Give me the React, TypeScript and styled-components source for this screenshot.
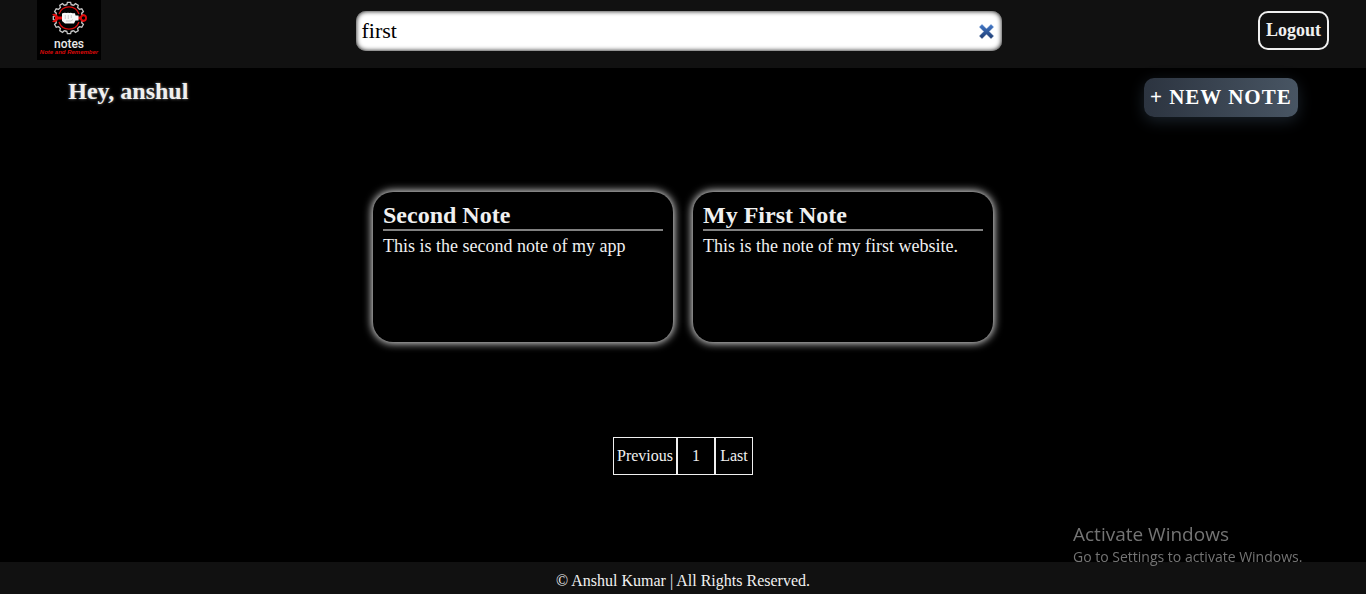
import React, { useState } from "react";
import styled, { createGlobalStyle } from "styled-components";

const GlobalStyle = createGlobalStyle`
  * { box-sizing: border-box; margin: 0; padding: 0; }
  body {
    background: #000;
    color: #f0f0f0;
    font-family: "Liberation Serif", "Times New Roman", serif;
    font-size: 16px;
  }
  button, input { font-family: inherit; }
`;

const Page = styled.div`
  display: flex;
  flex-direction: column;
  min-height: 100vh;
`;

const Header = styled.header`
  display: flex;
  justify-content: space-between;
  align-items: flex-start;
  height: 68px;
  padding: 0 37px;
  background: #111;
`;

const LogoLink = styled.a`
  display: block;
  width: 64px;
  height: 60px;
  background: #000;

  svg { display: block; }
`;

const SearchBox = styled.form`
  display: flex;
  align-items: center;
  width: 50%;
  height: 40px;
  margin-top: 11px;
  padding: 0 7px 0 5px;
  border-radius: 10px;
  background: #fff;
  box-shadow: inset 0 0 5px #000;
`;

const SearchInput = styled.input`
  flex: 1;
  min-width: 0;
  border: 0;
  outline: 0;
  background: transparent;
  color: #000;
  font-size: 22px;
  line-height: 26px;
`;

const ClearButton = styled.button`
  display: flex;
  border: 0;
  background: transparent;
  cursor: pointer;
`;

const LogoutButton = styled.button`
  height: 39px;
  margin-top: 11px;
  padding: 0 6px;
  border: 2px solid #f0f0f0;
  border-radius: 10px;
  background: transparent;
  color: #f0f0f0;
  font-size: 18px;
  font-weight: bold;
  cursor: pointer;
`;

const Main = styled.main`
  flex: 1;
`;

const TitleBar = styled.div`
  display: flex;
  justify-content: space-between;
  align-items: flex-start;
  padding: 10px 5% 0;
`;

const Greeting = styled.h1`
  font-size: 24px;
  line-height: 27px;
  text-shadow: 0 0 3px #808080;
`;

const NewNoteButton = styled.button`
  height: 39px;
  padding: 0 6px;
  border: 0;
  border-radius: 10px;
  background: linear-gradient(to right, #2c3440, #485563);
  box-shadow: 0 4px 15px rgba(65, 84, 105, 0.4);
  color: #fff;
  font-size: 21px;
  font-weight: bold;
  letter-spacing: 1px;
  cursor: pointer;
`;

const Notes = styled.section`
  display: flex;
  flex-wrap: wrap;
  justify-content: center;
  gap: 20px;
  margin-top: 75px;
`;

const NoteCard = styled.article`
  width: 300px;
  height: 150px;
  padding: 10px;
  border-radius: 20px;
  background: #000;
  box-shadow: 0 0 8px 1px #f0f0f0;
`;

const NoteTitle = styled.h2`
  border-bottom: 2px solid #808080;
  font-size: 24px;
  line-height: 27px;
`;

const NoteText = styled.p`
  margin-top: 5px;
  font-size: 18px;
  line-height: 20px;
`;

const Pagination = styled.nav`
  display: flex;
  justify-content: center;
  margin: 95px 0 40px;
`;

const PageButton = styled.button`
  min-width: 38px;
  height: 38px;
  padding: 0 3px;
  border: 1px solid #f0f0f0;
  background: transparent;
  color: #f0f0f0;
  font-size: 16px;
  cursor: pointer;
`;

const Footer = styled.footer`
  height: 32px;
  padding-top: 10px;
  background: #111;
  font-size: 16px;
  line-height: 18px;
  text-align: center;
`;

const Watermark = styled.aside`
  position: fixed;
  right: 57px;
  bottom: 27px;
  width: 236px;
  color: #747474;
  font-family: "Open Sans", "Noto Sans", sans-serif;
  font-size: 14px;
  line-height: 20px;
  white-space: nowrap;
  pointer-events: none;
`;

const WatermarkTitle = styled.p`
  font-size: 19px;
  line-height: 25px;
`;

const teeth = Array.from({ length: 12 }, (_, i) => i * 30);

const Logo = () => (
  <svg width="64" height="60" viewBox="0 0 64 60" aria-hidden="true">
    <g fill="none" stroke="#c8c8c8" strokeWidth="1.3">
      {teeth.map((angle) => (
        <path
          key={angle}
          d="M28.2 5 L29.8 4.600 L30.400 2.300 H33.600 L34.200 4.600 L35.800 5"
          transform={`rotate(${angle} 32 18)`}
        />
      ))}
    </g>
    <path
      d="M22 14 A10.600 10.600 0 0 1 42 14 M22 22 A10.600 10.600 0 0 0 42 22"
      fill="none"
      stroke="#d90a0a"
      strokeWidth="1.3"
    />
    <path
      d="M15 14.500 Q17 13.400 19 14.200 Q20.500 15 21 16.500 H43 Q44 14 46.500 14 Q50 14.500 50 18 Q50 21.500 46.500 22 Q44 22 43 19.500 H21 Q20.500 21 19 21.800 Q17 22.600 15 21.500 L18 19.500 V16.500 Z"
      fill="#e00b0b"
    />
    <circle cx="46.500" cy="18" r="1.700" fill="#000" />
    <path
      d="M25 14 Q25 13 26.500 13 Q27.500 12.400 29.500 13 Q31 12.400 32.500 13 Q34 12.500 35.500 13.200 H38 L38.500 15.500 H41.500 V20.500 H38.500 L37 23.500 H28 L25 21 Z"
      fill="#f6f6f6"
    />
    <path
      d="M28.300 15 V19 M31.300 15 V19 M34.300 15 V18 M29 21 H34 L36 19.500"
      fill="none"
      stroke="#888"
      strokeWidth="0.4"
    />
    <text
      x="32"
      y="48"
      textAnchor="middle"
      fill="#e8e8e8"
      fontFamily="Roboto, sans-serif"
      fontSize="12"
      fontWeight="500"
    >
      notes
    </text>
    <text
      x="32"
      y="54"
      textAnchor="middle"
      fill="#d90a0a"
      fontFamily="Liberation Sans, sans-serif"
      fontSize="6"
      fontStyle="italic"
      fontWeight="bold"
    >
      Note and Remember
    </text>
  </svg>
);

const notes = [
  { title: "Second Note", text: "This is the second note of my app" },
  { title: "My First Note", text: "This is the note of my first website." },
];

export default function App() {
  const [query, setQuery] = useState("first");

  return (
    <Page>
      <GlobalStyle />
      <Header>
        <LogoLink href="#" aria-label="Notes home">
          <Logo />
        </LogoLink>
        <SearchBox role="search" onSubmit={(e) => e.preventDefault()}>
          <SearchInput
            aria-label="Search notes"
            value={query}
            onChange={(e) => setQuery(e.target.value)}
          />
          <ClearButton type="button" aria-label="Clear search" onClick={() => setQuery("")}>
            <svg width="17" height="17" viewBox="0 0 17 17">
              <defs>
                <linearGradient id="clear" x1="0" y1="0" x2="0" y2="1">
                  <stop offset="0" stopColor="#4278c8" />
                  <stop offset="1" stopColor="#1f3d73" />
                </linearGradient>
              </defs>
              <path
                d="M1.500 4 L4 1.500 L8.500 6 L13 1.500 L15.500 4 L11 8.500 L15.500 13 L13 15.500 L8.500 11 L4 15.500 L1.500 13 L6 8.500 Z"
                fill="url(#clear)"
                stroke="url(#clear)"
                strokeWidth="0.5"
                strokeLinejoin="round"
              />
            </svg>
          </ClearButton>
        </SearchBox>
        <LogoutButton type="button">Logout</LogoutButton>
      </Header>
      <Main>
        <TitleBar>
          <Greeting>Hey, anshul</Greeting>
          <NewNoteButton type="button">+ NEW NOTE</NewNoteButton>
        </TitleBar>
        <Notes aria-label="Notes">
          {notes.map((note) => (
            <NoteCard key={note.title}>
              <NoteTitle>{note.title}</NoteTitle>
              <NoteText>{note.text}</NoteText>
            </NoteCard>
          ))}
        </Notes>
        <Pagination aria-label="Pages">
          <PageButton type="button">Previous</PageButton>
          <PageButton type="button">1</PageButton>
          <PageButton type="button">Last</PageButton>
        </Pagination>
      </Main>
      <Footer>© Anshul Kumar | All Rights Reserved.</Footer>
      <Watermark>
        <WatermarkTitle>Activate Windows</WatermarkTitle>
        <p>Go to Settings to activate Windows.</p>
      </Watermark>
    </Page>
  );
}
